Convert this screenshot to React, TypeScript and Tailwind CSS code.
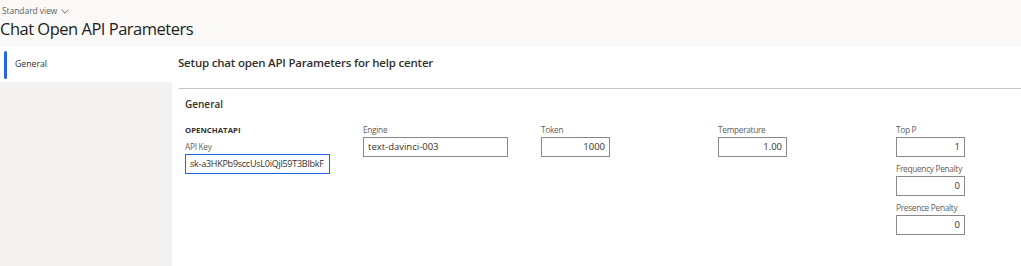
const font = { fontFamily: '"Segoe UI", "Open Sans", "Liberation Sans", sans-serif' };

function Field({ label, value, width, right, focused, small }: { label: string; value: string; width: string; right?: boolean; focused?: boolean; small?: boolean }) {
  return (
    <div className="flex flex-col">
      <label className="h-[12px] text-[8.3px] leading-[12px] tracking-[-0.3px] text-[#605e5c] whitespace-nowrap">{label}</label>
      <div
        className={`mt-[1px] h-[20px] ${width} border ${focused ? "border-[#2266e3]" : "border-[#8a8886]"} flex items-center px-[4px] ${small ? "text-[9px] tracking-[-0.25px]" : "text-[9.5px]"} text-[#323130] whitespace-nowrap overflow-hidden ${right ? "justify-end" : ""}`}
      >
        {value}
      </div>
    </div>
  );
}

export default function App() {
  return (
    <div className="w-[1021px] h-[266px] bg-[#faf9f8] flex flex-col overflow-hidden" style={font}>
      <div className="h-[47px] pl-[2px] pt-[5px]">
        <div className="flex items-center text-[8.4px] leading-[12px] text-[#605e5c]">
          Standard view
          <svg width="8" height="5" viewBox="0 0 8 5" className="ml-[4px]">
            <path d="M0.5 0.6 L4 4.2 L7.5 0.6" fill="none" stroke="#605e5c" strokeWidth="0.9" />
          </svg>
        </div>
        <h1 className="text-[16.5px] leading-[22px] tracking-[-0.5px] text-[#201f1e] -ml-[2px] mt-[1px]">Chat Open API Parameters</h1>
      </div>
      <div className="flex flex-1">
        <div className="w-[172px] bg-[#f3f2f1] flex flex-col">
          <div className="h-[35px] bg-white flex items-center">
            <div className="ml-[4px] w-[3px] h-[28px] rounded-full bg-[#2266e3]" />
            <span className="ml-[8px] text-[8.7px] text-[#323130]">General</span>
          </div>
        </div>
        <div className="flex-1 bg-white flex flex-col">
          <div className="h-[41px] pl-[6px] pt-[7px] text-[11.5px] leading-[18px] tracking-[-0.2px] font-semibold text-[#323130]">
            Setup chat open API Parameters for help center
          </div>
          <div className="ml-[7px] border-t border-[#c8c6c4] flex flex-col pl-[6px]">
            <div className="pt-[7px] text-[10px] leading-[16px] font-semibold text-[#323130]">General</div>
            <div className="flex mt-[12px]">
              <div className="w-[178px] flex flex-col">
                <div className="h-[12px] text-[7.8px] font-bold text-[#323130] leading-[12px]">OPENCHATAPI</div>
                <div className="mt-[5px]">
                  <Field label="API Key" value="sk-a3HKPb9sccUsL0iQjl59T3BlbkF" width="w-[145px]" focused small />
                </div>
              </div>
              <div className="w-[178px]">
                <Field label="Engine" value="text-davinci-003" width="w-[145px]" />
              </div>
              <div className="w-[177px]">
                <Field label="Token" value="1000" width="w-[69px]" right />
              </div>
              <div className="w-[178px]">
                <Field label="Temperature" value="1.00" width="w-[69px]" right />
              </div>
              <div className="flex flex-col gap-[6px]">
                <Field label="Top P" value="1" width="w-[69px]" right />
                <Field label="Frequency Penalty" value="0" width="w-[69px]" right />
                <Field label="Presence Penalty" value="0" width="w-[69px]" right />
              </div>
            </div>
          </div>
        </div>
      </div>
    </div>
  );
}
